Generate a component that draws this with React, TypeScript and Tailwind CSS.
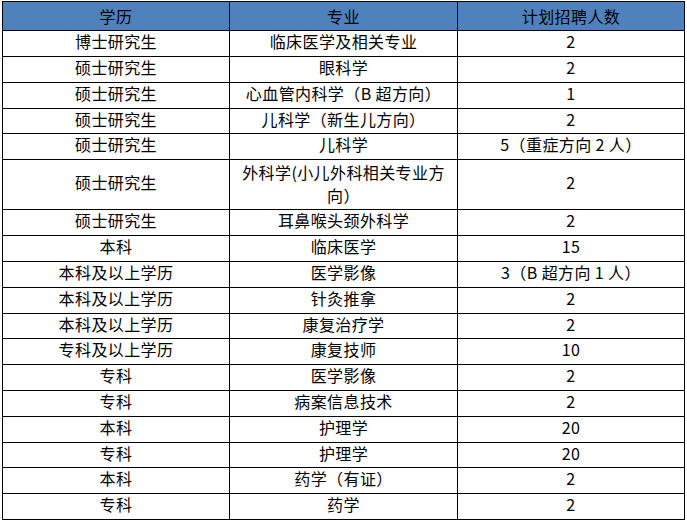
import React from "react"

type Row = { edu: string; major: React.ReactNode; count: string; h: number }

const rows: Row[] = [
  { edu: "博士研究生", major: "临床医学及相关专业", count: "2", h: 25 },
  { edu: "硕士研究生", major: "眼科学", count: "2", h: 25 },
  { edu: "硕士研究生", major: "心血管内科学（B 超方向）", count: "1", h: 25 },
  { edu: "硕士研究生", major: "儿科学（新生儿方向）", count: "2", h: 24 },
  { edu: "硕士研究生", major: "儿科学", count: "5（重症方向 2 人）", h: 25 },
  {
    edu: "硕士研究生",
    major: (
      <span className="block leading-[23px]">
        外科学(小儿外科相关专业方
        <br />
        向）
      </span>
    ),
    count: "2",
    h: 49,
  },
  { edu: "硕士研究生", major: "耳鼻喉头颈外科学", count: "2", h: 25 },
  { edu: "本科", major: "临床医学", count: "15", h: 25 },
  { edu: "本科及以上学历", major: "医学影像", count: "3（B 超方向 1 人）", h: 25 },
  { edu: "本科及以上学历", major: "针灸推拿", count: "2", h: 25 },
  { edu: "本科及以上学历", major: "康复治疗学", count: "2", h: 24 },
  { edu: "专科及以上学历", major: "康复技师", count: "10", h: 25 },
  { edu: "专科", major: "医学影像", count: "2", h: 25 },
  { edu: "专科", major: "病案信息技术", count: "2", h: 25 },
  { edu: "本科", major: "护理学", count: "20", h: 25 },
  { edu: "专科", major: "护理学", count: "20", h: 24 },
  { edu: "本科", major: "药学（有证）", count: "2", h: 25 },
  { edu: "专科", major: "药学", count: "2", h: 25 },
]

const cell =
  "bg-white flex items-center justify-center text-center leading-[21px] pb-[4px] tracking-[0.4px] whitespace-pre"
const tallCell =
  "bg-white flex items-center justify-center text-center leading-[21px] pb-[2px] tracking-[0.4px] whitespace-pre"

export default function App() {
  const rowTemplate = ["28px", ...rows.map((r) => `${r.h}px`)].join(" ")
  return (
    <div
      className="min-h-screen bg-white pt-px pl-[2px] text-[16px] text-black"
      style={{ fontFamily: '"Noto Sans CJK SC", "Noto Sans", sans-serif' }}
    >
      <div
        className="grid w-fit grid-cols-[226px_227px_226px] gap-px bg-black p-px"
        style={{ gridTemplateRows: rowTemplate }}
      >
        {/* 表头 */}
        <div className="flex items-center justify-center bg-[#4f81bd] tracking-[0.4px]">学历</div>
        <div className="flex items-center justify-center bg-[#4f81bd] tracking-[0.4px]">专业</div>
        <div className="flex items-center justify-center bg-[#4f81bd] tracking-[0.4px]">计划招聘人数</div>

        {rows.map((r, i) => (
          <React.Fragment key={i}>
            <div className={cell}>{r.edu}</div>
            <div className={r.h > 30 ? tallCell : cell}>{r.major}</div>
            <div className={cell}>{r.count}</div>
          </React.Fragment>
        ))}
      </div>
    </div>
  )
}
